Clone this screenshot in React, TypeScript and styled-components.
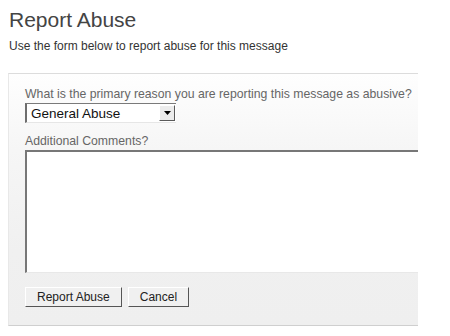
import styled, { createGlobalStyle } from 'styled-components';

const GlobalStyle = createGlobalStyle`
  html, body {
    margin: 0;
    padding: 0;
    background: #fff;
  }
  body {
    font-family: 'Liberation Sans', Arial, sans-serif;
  }
`;

const reasons = ['General Abuse', 'Spam', 'Harassment', 'Offensive Content'];

const App = () => {
  return (
    <>
      <GlobalStyle />
      <Page>
        <Title>Report Abuse</Title>
        <Subtitle>Use the form below to report abuse for this message</Subtitle>
        <Panel>
          <Label>What is the primary reason you are reporting this message as abusive?</Label>
          <SelectBox>
            <Select defaultValue={reasons[0]}>
              {reasons.map((r) => (
                <option key={r}>{r}</option>
              ))}
            </Select>
            <ArrowButton>
              <svg width="7" height="4" viewBox="0 0 7 4">
                <path d="M0 0h7L3.5 4z" fill="#000" />
              </svg>
            </ArrowButton>
          </SelectBox>
          <CommentsLabel>Additional Comments?</CommentsLabel>
          <Comments />
          <Actions>
            <Button type="button">Report Abuse</Button>
            <Button type="button">Cancel</Button>
          </Actions>
        </Panel>
      </Page>
    </>
  );
};

const Page = styled.div`
  padding: 8px 0 0 8px;
  width: 450px;
  height: 336px;
  box-sizing: border-box;
`;

const Title = styled.h1`
  margin: 0 0 0 1px;
  font-size: 21px;
  line-height: 24px;
  font-weight: normal;
  color: #444;
`;

const Subtitle = styled.div`
  margin: 7px 0 0 1px;
  font-size: 12px;
  line-height: 14px;
  color: #333;
`;

const Panel = styled.form`
  margin-top: 20px;
  width: 410px;
  height: 253px;
  box-sizing: border-box;
  padding: 13px 0 0 16px;
  border-top: 1px solid #dcdcdc;
  border-left: 1px solid #e8e8e8;
  border-bottom: 1px solid #cfcfcf;
  background: linear-gradient(#fefefe, #f6f6f6 30%, #f0f0f0 70%, #efefef);
  overflow: hidden;
`;

const Label = styled.div`
  font-size: 12.25px;
  line-height: 14px;
  color: #666;
  white-space: nowrap;
`;

const CommentsLabel = styled(Label)`
  margin-top: 11px;
`;

const SelectBox = styled.div`
  margin-top: 2px;
  display: flex;
  align-items: stretch;
  width: 151px;
  height: 20px;
  box-sizing: border-box;
  border-top: 1px solid #7a7a7a;
  border-left: 2px solid #6e6e6e;
  border-bottom: 1px solid #e6e6e6;
  background: #fff;
`;

const Select = styled.select`
  flex: 1;
  appearance: none;
  border: none;
  outline: none;
  background: transparent;
  padding: 0 0 0 4px;
  margin: 0;
  font-family: 'Liberation Sans', Arial, sans-serif;
  font-size: 13.5px;
  color: #111;
`;

const ArrowButton = styled.span`
  width: 14px;
  margin: 1px 1px 1px 0;
  display: flex;
  align-items: center;
  justify-content: center;
  background: #ececec;
  border-top: 1px solid #fff;
  border-left: 1px solid #fff;
  border-right: 1px solid #5a5a5a;
  border-bottom: 1px solid #5a5a5a;
`;

const Comments = styled.textarea`
  display: block;
  margin-top: 2px;
  width: 420px;
  height: 123px;
  box-sizing: border-box;
  border-top: 2px solid #777;
  border-left: 2px solid #777;
  border-right: 1px solid #ddd;
  border-bottom: 1px solid #e8e8e8;
  background: #fff;
  resize: none;
  outline: none;
  padding: 2px;
  font-family: 'Liberation Sans', Arial, sans-serif;
  font-size: 12px;
`;

const Actions = styled.div`
  margin-top: 14px;
  display: flex;
  gap: 6px;
`;

const Button = styled.button`
  height: 20px;
  padding: 0 11px;
  box-sizing: border-box;
  background: #f0f0f0;
  border-top: 1px solid #fff;
  border-left: 1px solid #fff;
  border-right: 1px solid #555;
  border-bottom: 1px solid #555;
  font-family: 'Liberation Sans', Arial, sans-serif;
  font-size: 12px;
  line-height: 18px;
  color: #222;
  cursor: pointer;
`;

export default App;
